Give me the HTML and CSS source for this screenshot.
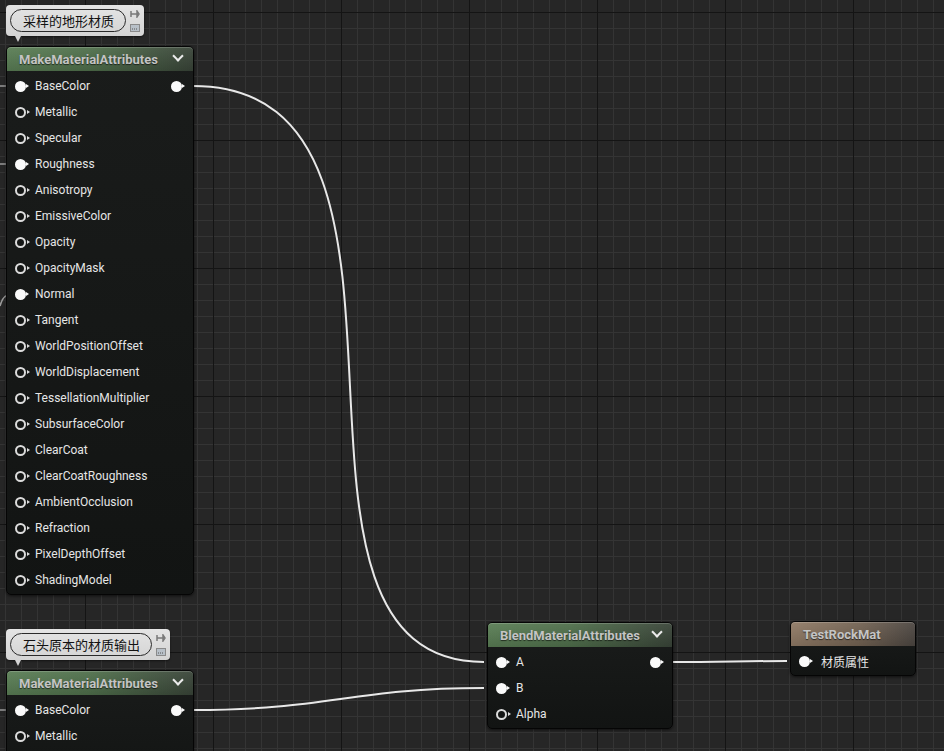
FILE: index.html
```html
<!DOCTYPE html>
<html>
<head>
<meta charset="utf-8">
<link rel="stylesheet" href="styles.css">
</head>
<body>
<div class="canvas">
  <svg class="wires" width="944" height="751" viewBox="0 0 944 751">
    <g fill="none" stroke="#e8e8e8" stroke-width="2">
      <path d="M193 86 C470 86 236 662 484 662"/>
      <path d="M193 710 C330 710 350 688 484 688"/>
      <path d="M672 662 C720 662 745 661 787 661"/>
    </g>
    <g fill="none" stroke="#9a9a9a" stroke-width="1.5">
      <path d="M0 86 L12 86"/>
      <path d="M0 164 L12 164"/>
      <path d="M0 306 C2 298 6 294 12 294"/>
      <path d="M0 710 L12 710"/>
    </g>
  </svg>

  <div class="comment c1">
    <div class="pill">采样的地形材质</div>
    <div class="cicons">
      <svg width="10" height="8" viewBox="0 0 10 8"><path d="M1 1v6M1 4h6M7 1v6l2-3z" stroke="#7a7a7a" stroke-width="1.5" fill="#7a7a7a"/></svg>
      <svg width="10" height="8" viewBox="0 0 10 8"><rect x="0.5" y="0.5" width="9" height="7" fill="#b8c0c8" stroke="#8a8a8a"/><path d="M2 5h1M4 5h1M6 5h1" stroke="#555"/></svg>
    </div>
    <span class="tail"></span>
  </div>

  <div class="node make1">
    <div class="head green"><span class="title">MakeMaterialAttributes</span><span class="chev"></span></div>
    <div class="body">
      <div class="row"><span class="pin on"></span><span class="lbl">BaseColor</span><span class="pin on out"></span></div>
      <div class="row"><span class="pin"></span><span class="lbl">Metallic</span></div>
      <div class="row"><span class="pin"></span><span class="lbl">Specular</span></div>
      <div class="row"><span class="pin on"></span><span class="lbl">Roughness</span></div>
      <div class="row"><span class="pin"></span><span class="lbl">Anisotropy</span></div>
      <div class="row"><span class="pin"></span><span class="lbl">EmissiveColor</span></div>
      <div class="row"><span class="pin"></span><span class="lbl">Opacity</span></div>
      <div class="row"><span class="pin"></span><span class="lbl">OpacityMask</span></div>
      <div class="row"><span class="pin on"></span><span class="lbl">Normal</span></div>
      <div class="row"><span class="pin"></span><span class="lbl">Tangent</span></div>
      <div class="row"><span class="pin"></span><span class="lbl">WorldPositionOffset</span></div>
      <div class="row"><span class="pin"></span><span class="lbl">WorldDisplacement</span></div>
      <div class="row"><span class="pin"></span><span class="lbl">TessellationMultiplier</span></div>
      <div class="row"><span class="pin"></span><span class="lbl">SubsurfaceColor</span></div>
      <div class="row"><span class="pin"></span><span class="lbl">ClearCoat</span></div>
      <div class="row"><span class="pin"></span><span class="lbl">ClearCoatRoughness</span></div>
      <div class="row"><span class="pin"></span><span class="lbl">AmbientOcclusion</span></div>
      <div class="row"><span class="pin"></span><span class="lbl">Refraction</span></div>
      <div class="row"><span class="pin"></span><span class="lbl">PixelDepthOffset</span></div>
      <div class="row"><span class="pin"></span><span class="lbl">ShadingModel</span></div>
    </div>
  </div>

  <div class="comment c2">
    <div class="pill">石头原本的材质输出</div>
    <div class="cicons">
      <svg width="10" height="8" viewBox="0 0 10 8"><path d="M1 1v6M1 4h6M7 1v6l2-3z" stroke="#7a7a7a" stroke-width="1.5" fill="#7a7a7a"/></svg>
      <svg width="10" height="8" viewBox="0 0 10 8"><rect x="0.5" y="0.5" width="9" height="7" fill="#b8c0c8" stroke="#8a8a8a"/><path d="M2 5h1M4 5h1M6 5h1" stroke="#555"/></svg>
    </div>
    <span class="tail"></span>
  </div>

  <div class="node make2">
    <div class="head green"><span class="title">MakeMaterialAttributes</span><span class="chev"></span></div>
    <div class="body tall">
      <div class="row"><span class="pin on"></span><span class="lbl">BaseColor</span><span class="pin on out"></span></div>
      <div class="row"><span class="pin"></span><span class="lbl">Metallic</span></div>
    </div>
  </div>

  <div class="node blend">
    <div class="head green"><span class="title">BlendMaterialAttributes</span><span class="chev"></span></div>
    <div class="body">
      <div class="row"><span class="pin on"></span><span class="lbl">A</span><span class="pin on out"></span></div>
      <div class="row"><span class="pin on"></span><span class="lbl">B</span></div>
      <div class="row"><span class="pin"></span><span class="lbl">Alpha</span></div>
    </div>
  </div>

  <div class="node result">
    <div class="head brown"><span class="title">TestRockMat</span></div>
    <div class="body">
      <div class="row"><span class="pin on"></span><span class="lbl cjk">材质属性</span></div>
    </div>
  </div>
</div>
</body>
</html>
```

FILE: styles.css
```css
html, body {
  margin: 0;
  padding: 0;
  background: #262626;
}
.canvas {
  position: relative;
  width: 944px;
  height: 751px;
  overflow: hidden;
  font-family: Roboto, "Noto Sans CJK SC", sans-serif;
  background-color: #262626;
  background-image:
    linear-gradient(to right, #141414 1px, transparent 1px),
    linear-gradient(to bottom, #141414 1px, transparent 1px),
    linear-gradient(to right, #343434 1px, transparent 1px),
    linear-gradient(to bottom, #343434 1px, transparent 1px);
  background-size: 128px 128px, 128px 128px, 16px 16px, 16px 16px;
  background-position: 85px 0, 0 12px, 5px 0, 0 12px;
}
.wires {
  position: absolute;
  left: 0;
  top: 0;
  z-index: 1;
}
.node {
  position: absolute;
  z-index: 2;
  background: linear-gradient(to bottom, #1a1c1b, #121413);
  border: 1px solid #050505;
  border-radius: 5px;
  box-shadow: 0 1px 3px rgba(0,0,0,0.6);
  color: #e6e6e6;
  font-size: 12px;
}
.make1 { left: 6px; top: 46px; width: 186px; }
.make2 { left: 6px; top: 670px; width: 186px; }
.blend { left: 487px; top: 622px; width: 184px; }
.result { left: 790px; top: 621px; width: 124px; }

.head {
  height: 24px;
  display: flex;
  align-items: center;
  justify-content: space-between;
  padding: 0 8px 0 12px;
  border-radius: 4px 4px 0 0;
  box-shadow: inset 0 1px 0 rgba(255,255,255,0.18);
}
.head.green {
  background: linear-gradient(to bottom, rgba(255,255,255,0.06), rgba(0,0,0,0.12)),
              linear-gradient(to right, #5a7e55 0%, #4f6f4b 45%, #394438 100%);
}
.head.brown {
  background: linear-gradient(to bottom, rgba(255,255,255,0.06), rgba(0,0,0,0.12)),
              linear-gradient(to right, #917b66 0%, #736353 55%, #4c4641 100%);
}
.title {
  font-weight: bold;
  color: #c4c4c4;
  font-size: 13px;
  text-shadow: 0 1px 1px rgba(0,0,0,0.6);
}
.chev {
  width: 6px;
  height: 6px;
  border-right: 2px solid #ececec;
  border-bottom: 2px solid #ececec;
  transform: translateY(-3px) rotate(45deg);
  margin-right: 3px;
}
.body {
  padding-top: 2px;
  padding-bottom: 1px;
}
.body.tall { padding-bottom: 40px; }
.row {
  height: 26px;
  display: flex;
  align-items: center;
  padding: 0 8px 0 8px;
}
.lbl {
  margin-left: 6px;
  flex: 1;
  white-space: nowrap;
}
.lbl.cjk { font-family: "Noto Sans CJK SC", sans-serif; font-size: 12px; margin-left: 8px; }
.pin {
  position: relative;
  width: 14px;
  height: 11px;
  flex: none;
}
.pin::before {
  content: "";
  position: absolute;
  left: 0;
  top: 0;
  width: 7px;
  height: 7px;
  border: 2px solid #dcdcdc;
  border-radius: 50%;
  background: #141615;
}
.pin::after {
  content: "";
  position: absolute;
  left: 12px;
  top: 3px;
  border-left: 3px solid #dcdcdc;
  border-top: 2.5px solid transparent;
  border-bottom: 2.5px solid transparent;
}
.pin.on::before {
  width: 11px;
  height: 11px;
  border: 0;
  background: #fafafa;
}
.pin.on::after { border-left-color: #fafafa; left: 11px; }

.comment {
  position: absolute;
  z-index: 3;
  display: flex;
  align-items: flex-start;
  gap: 4px;
  padding: 4px;
  background: linear-gradient(to bottom, #e4e4e4, #d4d4d4);
  border-radius: 4px;
  box-shadow: 0 1px 2px rgba(0,0,0,0.5);
}
.c1 { left: 6px; top: 5px; width: 130px; height: 23px; }
.c2 { left: 6px; top: 629px; width: 156px; height: 23px; }
.pill {
  height: 21px;
  flex: 1;
  border: 1px solid #2a2a2a;
  border-radius: 12px;
  display: flex;
  align-items: center;
  padding-left: 12px;
  font-family: "Noto Sans CJK SC", sans-serif;
  font-size: 13px;
  color: #121212;
  white-space: nowrap;
}
.cicons {
  width: 10px;
  display: flex;
  flex-direction: column;
  gap: 6px;
  padding-top: 1px;
}
.cicons svg { display: block; }
.tail {
  position: absolute;
  left: 9px;
  bottom: -6px;
  border-top: 6px solid #d4d4d4;
  border-left: 3px solid transparent;
  border-right: 3px solid transparent;
}
```
